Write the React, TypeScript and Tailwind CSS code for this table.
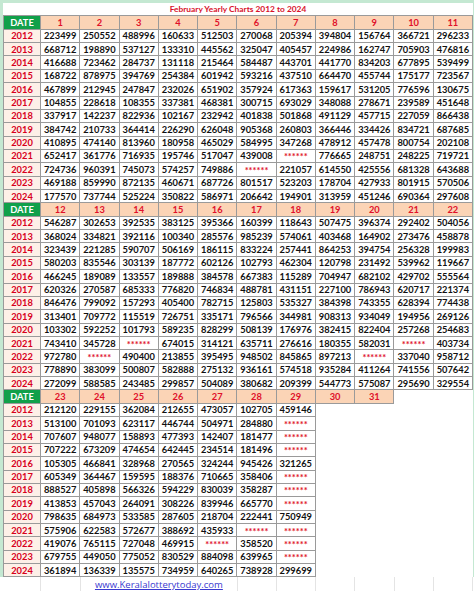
import React from "react";

const S = "******";

const SECTIONS: { days: number[]; rows: Record<string, string[]> }[] = [
  {
    days: [1, 2, 3, 4, 5, 6, 7, 8, 9, 10, 11],
    rows: {
      "2012": ["223499", "250552", "488996", "160633", "512503", "270068", "205394", "394804", "156764", "366721", "296233"],
      "2013": ["668712", "198890", "537127", "133310", "445562", "325047", "405457", "224986", "162747", "705903", "476816"],
      "2014": ["416688", "723462", "284737", "131118", "215464", "584487", "443701", "441770", "834203", "677895", "539499"],
      "2015": ["168722", "878975", "394769", "254384", "601942", "593216", "437510", "664470", "455744", "175177", "723567"],
      "2016": ["467899", "212945", "247847", "232026", "651902", "357924", "617363", "159617", "531205", "776596", "130675"],
      "2017": ["104855", "228618", "108355", "337381", "468381", "300715", "693029", "348088", "278671", "239589", "451648"],
      "2018": ["337917", "142237", "822936", "102167", "232942", "401838", "501868", "491129", "457715", "227059", "866438"],
      "2019": ["384742", "210733", "364414", "226290", "626048", "905368", "260803", "366446", "334426", "834721", "687685"],
      "2020": ["410895", "474140", "813960", "180958", "465029", "584995", "347268", "478912", "457478", "800754", "202108"],
      "2021": ["652417", "361776", "716935", "195746", "517047", "439008", S, "776665", "248751", "248225", "719721"],
      "2022": ["724736", "960391", "745073", "574257", "749886", S, "221057", "614550", "425556", "681328", "643688"],
      "2023": ["469188", "859990", "872135", "460671", "687726", "801517", "523203", "178704", "427933", "801915", "570506"],
      "2024": ["177570", "737744", "525224", "350822", "586971", "206642", "194901", "313959", "451246", "690364", "297608"],
    },
  },
  {
    days: [12, 13, 14, 15, 16, 17, 18, 19, 20, 21, 22],
    rows: {
      "2012": ["546287", "302653", "392535", "383125", "395366", "160399", "118643", "507475", "396374", "292402", "504056"],
      "2013": ["368024", "334821", "392116", "100340", "285576", "985239", "574061", "403468", "164902", "273476", "458878"],
      "2014": ["323439", "221285", "590707", "506169", "186115", "833224", "257441", "864253", "394754", "256328", "199983"],
      "2015": ["580203", "835546", "303139", "187772", "602126", "102793", "462304", "120798", "231492", "539962", "119667"],
      "2016": ["466245", "189089", "133557", "189888", "384578", "667383", "115289", "704947", "682102", "429702", "555564"],
      "2017": ["620326", "270587", "685333", "776820", "746834", "488781", "431151", "227100", "786943", "620717", "221374"],
      "2018": ["846476", "799092", "157293", "405400", "782715", "125803", "535327", "384398", "743355", "628394", "774438"],
      "2019": ["313401", "709772", "115519", "726751", "335171", "796566", "344981", "908313", "934049", "194956", "269126"],
      "2020": ["103302", "592252", "101793", "589235", "828299", "508139", "176976", "382415", "822404", "257268", "254683"],
      "2021": ["743410", "345728", S, "674015", "314121", "635711", "276616", "180355", "582031", S, "403734"],
      "2022": ["972780", S, "490400", "213855", "395495", "948502", "845865", "897213", S, "337040", "958712"],
      "2023": ["778890", "383099", "500807", "582888", "275132", "936161", "574518", "935284", "411264", "741556", "507642"],
      "2024": ["272099", "588585", "243485", "299857", "504089", "380682", "209399", "544773", "575087", "295690", "329554"],
    },
  },
  {
    days: [23, 24, 25, 26, 27, 28, 29, 30, 31, 0, 0],
    rows: {
      "2012": ["212120", "229155", "362084", "212655", "473057", "102705", "459146"],
      "2013": ["513100", "701093", "623117", "446744", "504971", "284880", S],
      "2014": ["707607", "948077", "158893", "477393", "142407", "181477", S],
      "2015": ["707222", "673209", "474654", "642445", "234514", "181496", S],
      "2016": ["105305", "466841", "328968", "270565", "324244", "945426", "321265"],
      "2017": ["605349", "364467", "159595", "188376", "710665", "358406", S],
      "2018": ["888527", "405898", "566326", "594229", "830039", "358287", S],
      "2019": ["413853", "457043", "264091", "308226", "839946", "665770", S],
      "2020": ["798635", "684973", "533585", "287605", "218704", "222441", "750949"],
      "2021": ["575906", "622583", "572677", "388692", "435933", S, S],
      "2022": ["419076", "765115", "727048", "469915", S, "358520", S],
      "2023": ["679755", "449050", "775052", "830529", "884098", "639965", S],
      "2024": ["361894", "136339", "135575", "734959", "640265", "738928", "299699"],
    },
  },
];

const cell = "flex items-center justify-center leading-none border-r border-b border-[#9a9a9a]";

function Section({ days, rows }: (typeof SECTIONS)[number]) {
  return (
    <>
      <div className={`${cell} border-l bg-[#10a04a] text-white`}>DATE</div>
      {days.map((d, i) =>
        d ? (
          <div key={i} className={`${cell} bg-[#fbd4b6] text-[#e0102a]`}>
            {d}
          </div>
        ) : (
          <div key={i} />
        )
      )}
      {Object.entries(rows).map(([year, vals]) => (
        <React.Fragment key={year}>
          <div className={`${cell} border-l bg-[#fdf0e8] text-[#d8001c]`}>{year}</div>
          {days.map((_, i) =>
            vals[i] ? (
              <div
                key={i}
                className={`${cell} bg-white ${vals[i] === S ? "text-[#e0102a] pt-[2px]" : "text-[#111]"}`}
              >
                {vals[i]}
              </div>
            ) : (
              <div key={i} className="bg-white" />
            )
          )}
        </React.Fragment>
      ))}
    </>
  );
}

export default function App() {
  return (
    <div className="w-[474px] h-[591px] bg-white overflow-hidden" style={{ fontFamily: "Lato, 'Noto Sans', sans-serif" }}>
      <div className="bg-[#c4e8d2] pt-[3px] pl-[3px] pr-[1px]">
        <div className="grid grid-cols-[38px_repeat(11,1fr)] auto-rows-[13.36px] bg-white text-[9.3px] font-bold">
          <div className="col-span-12 h-[13px] flex items-center justify-center text-[8.4px] text-[#d8102a] border-b border-[#9a9a9a]">
            February Yearly Charts 2012 to 2024
          </div>
          {SECTIONS.map((s, i) => (
            <Section key={i} {...s} />
          ))}
        </div>
      </div>
      <div className="grid grid-cols-[41px_40px_repeat(10,1fr)] h-[15px] pr-[1px]">
        <div className="border-r border-[#e4e4e4]" />
        <div className="border-r border-[#e4e4e4]" />
        <div className="col-span-4 border-r border-[#e4e4e4] flex items-center justify-center">
          <span className="text-[9.5px] text-[#3a3ad0] underline leading-none" style={{ fontFamily: "'Open Sans', sans-serif" }}>
            www.Keralalotterytoday.com
          </span>
        </div>
        {[0, 1, 2, 3, 4, 5].map((i) => (
          <div key={i} className="border-r border-[#e4e4e4]" />
        ))}
      </div>
    </div>
  );
}
